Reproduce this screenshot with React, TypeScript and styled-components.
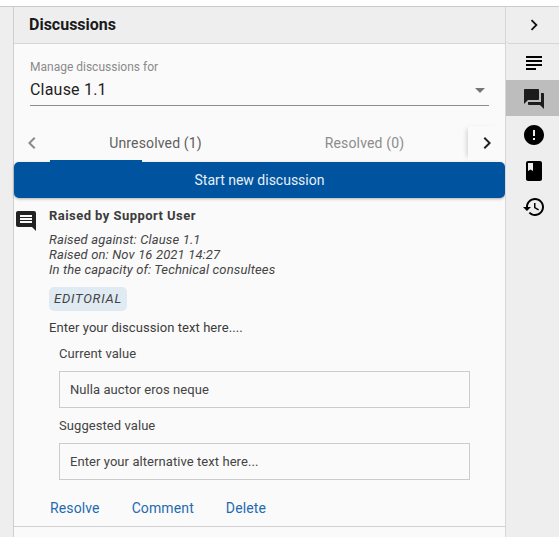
import styled, { createGlobalStyle } from "styled-components";

const Global = createGlobalStyle`
  html, body {
    margin: 0;
    padding: 0;
    height: 537px;
    overflow: hidden;
    background: #fff;
    font-family: Roboto, "Liberation Sans", Arial, sans-serif;
  }
`;

const Page = styled.div`
  width: 559px;
  height: 537px;
  padding-top: 6px;
  box-sizing: border-box;
  display: flex;
  flex-direction: column;
`;

const Frame = styled.div`
  flex: 1;
  min-height: 0;
  display: flex;
  border-top: 1px solid #c9cccc;
`;

const LeftRail = styled.div`
  width: 13px;
  background: #eeeeee;
  border-right: 1px solid #cfcfcf;
`;

const Panel = styled.div`
  width: 491px;
  background: #fafafa;
  display: flex;
  flex-direction: column;
`;

const Header = styled.div`
  height: 35px;
  padding: 0 0 1px 15px;
  background: #eeeeee;
  border-bottom: 1px solid #d6d6d6;
  display: flex;
  align-items: center;
  font-size: 16px;
  font-weight: 700;
  color: #1a1a1a;
`;

const SelectBox = styled.div`
  margin: 15px 16px 0;
  height: 46px;
  border-bottom: 1px solid #8c8c8c;
  display: flex;
  flex-direction: column;
`;

const SelectLabel = styled.div`
  font-size: 12px;
  line-height: 14px;
  margin-top: 1px;
  color: #8a8a8a;
`;

const SelectRow = styled.div`
  display: flex;
  justify-content: space-between;
  align-items: center;
  margin-top: 6px;
  font-size: 16px;
  line-height: 20px;
  letter-spacing: 0.2px;
  color: #1e1e1e;
`;

const Caret = styled.span`
  width: 0;
  height: 0;
  margin-right: 4px;
  border-left: 5px solid transparent;
  border-right: 5px solid transparent;
  border-top: 5px solid #757575;
`;

const Tabs = styled.div`
  position: relative;
  margin-top: 20px;
  height: 36px;
  padding-bottom: 2px;
  box-sizing: border-box;
  display: flex;
`;

const TabArrow = styled.div<{ $side: "left" | "right" }>`
  width: ${(p) => (p.$side === "left" ? "36px" : "37px")};
  display: flex;
  align-items: center;
  justify-content: center;
  box-shadow: ${(p) => (p.$side === "right" ? "-4px 0 5px -3px rgba(0,0,0,.18)" : "none")};
  svg {
    display: block;
  }
`;

const Tab = styled.div<{ $active?: boolean }>`
  flex: 1;
  padding-left: 2px;
  display: flex;
  align-items: center;
  justify-content: center;
  font-size: 14px;
  letter-spacing: 0.15px;
  color: ${(p) => (p.$active ? "#5f5f5f" : "#8c8c8c")};
`;

const Indicator = styled.div`
  position: absolute;
  left: 36px;
  bottom: 0;
  width: 92px;
  height: 2px;
  background: #00549f;
`;

const NewButton = styled.button`
  display: block;
  width: 100%;
  height: 36px;
  border: 0;
  border-radius: 5px;
  background: #00549f;
  color: #e8eff6;
  font-family: inherit;
  font-size: 14px;
  font-weight: 400;
  box-shadow: 0 1px 3px rgba(0, 0, 0, 0.3);
`;

const Discussion = styled.div`
  margin-top: 10px;
  padding: 0 0 9px 0;
  border-bottom: 1px solid #d0d0d0;
  display: flex;
`;

const DiscussionIcon = styled.div`
  width: 35px;
  flex: none;
  padding-top: 1px;
  svg {
    display: block;
  }
`;

const Body = styled.div`
  flex: 1;
  min-width: 0;
`;

const Raised = styled.div`
  font-size: 13px;
  font-weight: 700;
  line-height: 16px;
  letter-spacing: 0.45px;
  color: #3c3c3c;
`;

const Meta = styled.div`
  margin-top: 8px;
  font-size: 13px;
  line-height: 15px;
  font-style: italic;
  letter-spacing: 0.14px;
  color: #444444;
`;

const Tag = styled.div`
  display: inline-block;
  margin-top: 10px;
  padding: 0 5px;
  height: 24px;
  line-height: 24px;
  border-radius: 5px;
  background: #dfeaf3;
  font-size: 13px;
  font-style: italic;
  letter-spacing: 0.78px;
  color: #444444;
`;

const Text = styled.div`
  margin-top: 9px;
  font-size: 13px;
  line-height: 16px;
  letter-spacing: 0.07px;
  color: #3c3c3c;
`;

const Field = styled.div`
  margin-left: 10px;
  width: 411px;
`;

const FieldLabel = styled.div`
  margin-top: 10px;
  font-size: 13px;
  line-height: 16px;
  letter-spacing: 0.07px;
  color: #444444;
`;

const FieldValue = styled.div`
  margin-top: 9px;
  height: 37px;
  box-sizing: border-box;
  border: 1px solid #cccccc;
  padding-left: 10px;
  display: flex;
  align-items: center;
  font-size: 13px;
  letter-spacing: 0.07px;
  color: #444444;
`;

const Actions = styled.div`
  margin-top: 19px;
  padding-left: 1px;
  display: flex;
  gap: 32px;
  font-size: 14px;
  line-height: 18px;
  letter-spacing: 0.12px;
`;

const Action = styled.a`
  color: #1f6bb0;
`;

const RightRail = styled.div`
  width: 54px;
  background: #eeeeee;
  border-left: 1px solid #d6d6d6;
  box-sizing: border-box;
  display: flex;
  flex-direction: column;
`;

const RailTop = styled.div`
  height: 36px;
  padding-left: 2px;
  display: flex;
  align-items: center;
  justify-content: center;
  border-bottom: 1px solid #d6d6d6;
  border-bottom-left-radius: 4px;
`;

const RailItem = styled.div<{ $active?: boolean }>`
  height: 36px;
  padding: 2px 0 0 2px;
  box-sizing: border-box;
  display: flex;
  align-items: center;
  justify-content: center;
  background: ${(p) => (p.$active ? "#bdbdbd" : "transparent")};
`;

const Icon = ({ d, size = 24, color = "#000" }: { d: string; size?: number; color?: string }) => (
  <svg width={size} height={size} viewBox="0 0 24 24" fill={color}>
    <path d={d} />
  </svg>
);

const chevronLeft = "M15.41 7.41 14 6l-6 6 6 6 1.41-1.41L10.83 12z";
const chevronRight = "M10 6 8.59 7.41 13.17 12l-4.58 4.59L10 18l6-6z";
const subject = "M14 17H4v2h10v-2zm6-8H4v2h16V9zM4 15h16v-2H4v2zM4 5v2h16V5H4z";
const forum =
  "M21 6h-2v9H6v2c0 .55.45 1 1 1h11l4 4V7c0-.55-.45-1-1-1zm-4 6V3c0-.55-.45-1-1-1H3c-.55 0-1 .45-1 1v14l4-4h10c.55 0 1-.45 1-1z";
const error =
  "M12 2C6.48 2 2 6.48 2 12s4.48 10 10 10 10-4.48 10-10S17.52 2 12 2zm1 15h-2v-2h2v2zm0-4h-2V7h2v6z";
const book =
  "M18 2H6c-1.1 0-2 .9-2 2v16c0 1.1.9 2 2 2h12c1.1 0 2-.9 2-2V4c0-1.1-.9-2-2-2zM6 4h5v8l-2.5-1.5L6 12V4z";
const history =
  "M13 3c-4.97 0-9 4.03-9 9H1l3.89 3.89.07.14L9 12H6c0-3.87 3.13-7 7-7s7 3.13 7 7-3.13 7-7 7c-1.93 0-3.68-.79-4.94-2.06l-1.42 1.42C8.27 19.99 10.51 21 13 21c4.97 0 9-4.03 9-9s-4.03-9-9-9zm-1 5v5l4.28 2.54.72-1.21-3.5-2.08V8H12z";
const comment =
  "M21.99 4c0-1.1-.89-2-1.99-2H4c-1.1 0-2 .9-2 2v12c0 1.1.9 2 2 2h14l4 4-.01-18zM18 14H6v-2h12v2zm0-3H6V9h12v2zm0-3H6V6h12v2z";

const App = () => {
  return (
    <>
      <Global />
      <Page>
        <Frame>
          <LeftRail />
          <Panel>
            <Header>Discussions</Header>
            <SelectBox>
              <SelectLabel>Manage discussions for</SelectLabel>
              <SelectRow>
                Clause 1.1
                <Caret />
              </SelectRow>
            </SelectBox>
            <Tabs>
              <TabArrow $side="left">
                <Icon d={chevronLeft} color="#8a8a8a" />
              </TabArrow>
              <Tab $active>Unresolved (1)</Tab>
              <Tab>Resolved (0)</Tab>
              <TabArrow $side="right">
                <Icon d={chevronRight} color="#222" />
              </TabArrow>
              <Indicator />
            </Tabs>
            <NewButton>Start new discussion</NewButton>
            <Discussion>
              <DiscussionIcon>
                <Icon d={comment} color="#222" />
              </DiscussionIcon>
              <Body>
                <Raised>Raised by Support User</Raised>
                <Meta>
                  Raised against: Clause 1.1
                  <br />
                  Raised on: Nov 16 2021 14:27
                  <br />
                  In the capacity of: Technical consultees
                </Meta>
                <Tag>EDITORIAL</Tag>
                <Text>Enter your discussion text here....</Text>
                <Field>
                  <FieldLabel>Current value</FieldLabel>
                  <FieldValue>Nulla auctor eros neque</FieldValue>
                  <FieldLabel>Suggested value</FieldLabel>
                  <FieldValue>Enter your alternative text here...</FieldValue>
                </Field>
                <Actions>
                  <Action>Resolve</Action>
                  <Action>Comment</Action>
                  <Action>Delete</Action>
                </Actions>
              </Body>
            </Discussion>
          </Panel>
          <RightRail>
            <RailTop>
              <Icon d={chevronRight} size={22} color="#111" />
            </RailTop>
            <RailItem>
              <Icon d={subject} />
            </RailItem>
            <RailItem $active>
              <Icon d={forum} color="#1c1c1c" />
            </RailItem>
            <RailItem>
              <Icon d={error} />
            </RailItem>
            <RailItem>
              <Icon d={book} />
            </RailItem>
            <RailItem>
              <Icon d={history} />
            </RailItem>
          </RightRail>
        </Frame>
      </Page>
    </>
  );
};

export default App;
